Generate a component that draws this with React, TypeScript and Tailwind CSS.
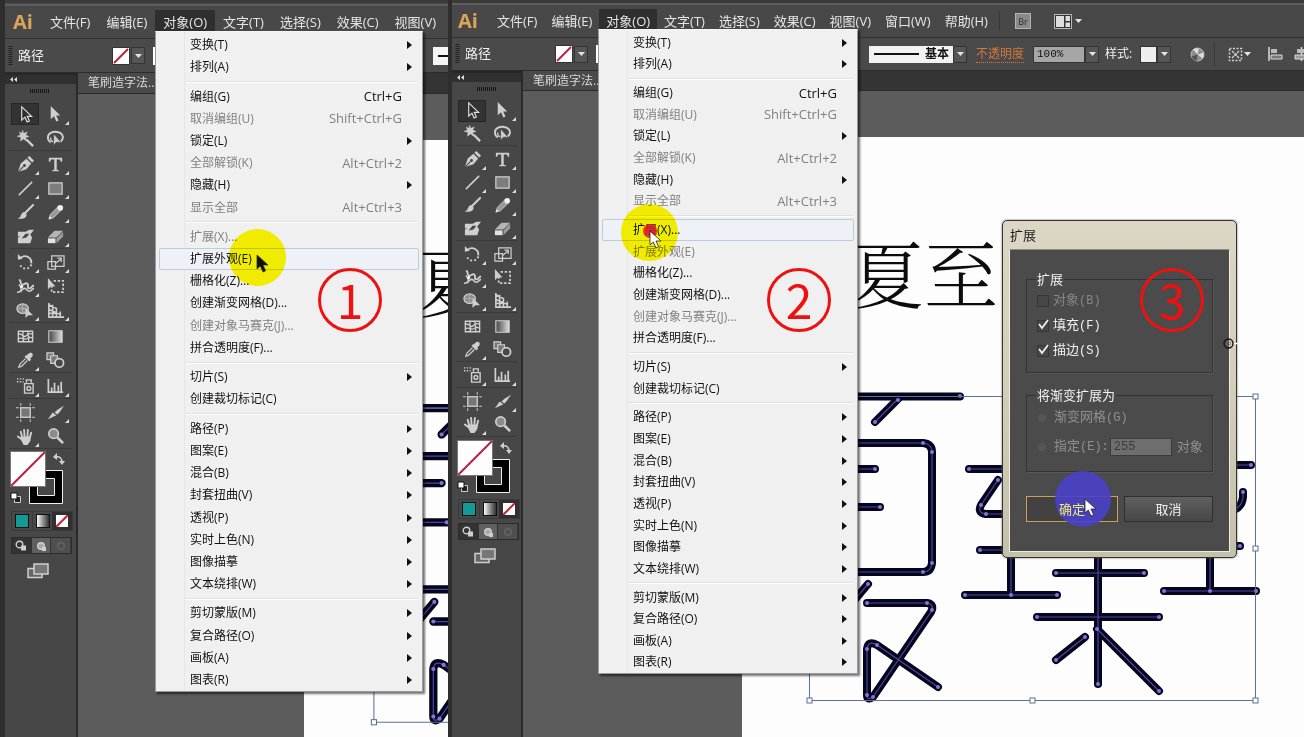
import React from "react";

type Item = { label: string; keys?: string; sub?: boolean; off?: boolean };

const menuGroups: Item[][] = [
  [
    { label: "变换(T)", sub: true },
    { label: "排列(A)", sub: true },
  ],
  [
    { label: "编组(G)", keys: "Ctrl+G" },
    { label: "取消编组(U)", keys: "Shift+Ctrl+G", off: true },
    { label: "锁定(L)", sub: true },
    { label: "全部解锁(K)", keys: "Alt+Ctrl+2", off: true },
    { label: "隐藏(H)", sub: true },
    { label: "显示全部", keys: "Alt+Ctrl+3", off: true },
  ],
  [
    { label: "扩展(X)..." },
    { label: "扩展外观(E)" },
    { label: "栅格化(Z)..." },
    { label: "创建渐变网格(D)..." },
    { label: "创建对象马赛克(J)...", off: true },
    { label: "拼合透明度(F)..." },
  ],
  [{ label: "切片(S)", sub: true }, { label: "创建裁切标记(C)" }],
  [
    { label: "路径(P)", sub: true },
    { label: "图案(E)", sub: true },
    { label: "混合(B)", sub: true },
    { label: "封套扭曲(V)", sub: true },
    { label: "透视(P)", sub: true },
    { label: "实时上色(N)", sub: true },
    { label: "图像描摹", sub: true },
    { label: "文本绕排(W)", sub: true },
  ],
  [
    { label: "剪切蒙版(M)", sub: true },
    { label: "复合路径(O)", sub: true },
    { label: "画板(A)", sub: true },
    { label: "图表(R)", sub: true },
  ],
];

function ObjectMenu({ place, active, off }: { place: string; active: string; off: string }) {
  return (
    <div
      role="menu"
      className={`absolute z-10 flex flex-col border border-[#9a9a9a] border-t-[#f6f6f6] bg-[#f0f0f0] pt-[2px] text-xs text-[#111] shadow-[2px_2px_2px_rgba(0,0,0,0.55)] ${place}`}
    >
      <div className="absolute inset-y-0 left-[28px] w-px bg-[#e6e6e6]" />
      {menuGroups.map((group, g) => (
        <React.Fragment key={g}>
          {g > 0 && (
            <div className="flex min-h-0 flex-[8_1_0%] items-center pl-[30px] pr-1">
              <div className="h-[2px] w-full border-b border-white bg-[#e0e0e0]" />
            </div>
          )}
          {group.map((item) => {
            const disabled = item.off || item.label === off;
            return (
              <button
                key={item.label}
                role="menuitem"
                disabled={disabled}
                className={`relative mx-[3px] flex min-h-0 flex-[22_1_0%] items-center rounded-[2px] border pl-[30px] pr-[6px] text-left leading-none ${
                  item.label === active ? "border-[#c0cadd] bg-[#eef1f8]" : "border-transparent"
                } ${disabled ? "text-[#808080]" : ""}`}
              >
                <span className="flex-1 whitespace-nowrap">{item.label}</span>
                {item.keys && <span className="pr-[10px] text-[13px]">{item.keys}</span>}
                {item.sub && (
                  <svg width="5" height="8" viewBox="0 0 5 8" aria-hidden="true">
                    <path d="M0 0 5 4 0 8Z" fill="#111" />
                  </svg>
                )}
              </button>
            );
          })}
        </React.Fragment>
      ))}
    </div>
  );
}

const L = "#cfcfcf";
const toolIcons: Record<string, React.ReactNode> = {
  选择: <path d="M6 2v14l3.4-3.2 2.3 5.2 2.4-1.1-2.3-5h4.6Z" fill="#2c2c2c" stroke="#e0e0e0" strokeWidth="1.2" />,
  直接选择: <path d="M5 1v14l3.4-3.2 2.5 5.6 2.3-1-2.5-5.4H15Z" fill={L} />,
  魔棒: (
    <g stroke={L} fill={L}>
      <path d="m7 1 1.2 3.4L12 3l-1.6 3.4L14 8l-3.6 1L11 13 8 10.4 4.6 13l.6-4L1 7.6l3.6-1.4L3.4 3l3 1.4Z" strokeWidth=".3" />
      <path d="m11 11 7 7" strokeWidth="2.4" />
    </g>
  ),
  套索: (
    <g fill="none" stroke={L} strokeWidth="2">
      <path d="M5 14C1 12 1 6 5 4s10-1 12 2 0 7-3 8" />
      <path d="M5 9c-1 3 2 5 4 4" strokeWidth="1.4" />
      <path d="M8 5v12l3-3h5Z" fill={L} stroke="#474747" strokeWidth=".8" />
    </g>
  ),
  钢笔: (
    <g fill={L}>
      <path d="M2 18 5 9l6-5 5 5-5 6Z" />
      <path d="m12 3 2-2 5 5-2 2Z" />
      <path d="m2 18 6-6" stroke="#474747" strokeWidth="1.2" />
      <circle cx="9" cy="11" r="1.5" fill="#474747" />
    </g>
  ),
  文字: <path d="M3 3h14v4h-1.4l-.8-2.3h-3.5v10.8l2.2.5v1H6.500v-1l2.200-.5V4.700H5.200L4.400 7H3Z" fill={L} />,
  直线段: <path d="M3 17 17 3" stroke={L} strokeWidth="1.6" />,
  矩形: <path d="M3 4h14v12H3Z" fill="#7d7d7d" stroke={L} strokeWidth="1.3" />,
  画笔: (
    <g>
      <path d="M18 2 9 11" stroke={L} strokeWidth="2.200" strokeLinecap="round" />
      <path d="M9.500 10c2 1 2 3 1 4.500-2 2.500-6 2.500-9 1.500 3-.5 3-2 4-4s2.500-2.500 4-2Z" fill={L} />
    </g>
  ),
  铅笔: (
    <g>
      <path d="m3 17 1.500-5 8-8 3.500 3.500-8 8Z" fill="#9a9a9a" stroke={L} strokeWidth=".8" />
      <circle cx="15" cy="5" r="3" fill="#f0f0f0" />
      <path d="m3 17 1-3 2 2Z" fill="#eee" />
    </g>
  ),
  斑点画笔: (
    <g>
      <path d="M2 5h8l4-2h5l-4 5 2 3-2 6H2v-6l3-1H2Z" fill={L} />
      <path d="m6 12 4-5h4l-3 4Z" fill="#474747" />
    </g>
  ),
  橡皮擦: (
    <g>
      <path d="m2 11 7-7h9l-7 7Z" fill="#b5b5b5" />
      <path d="M2 12h8v5H2Z" fill="#e2e2e2" />
      <path d="m11 12 7-7v5l-7 7Z" fill="#9a9a9a" />
    </g>
  ),
  旋转: (
    <g fill="none" stroke={L} strokeWidth="2">
      <path d="M5 5c5-4 12 0 11 6" />
      <path d="M16 12c-1 6-11 6-12-1" strokeDasharray="2 2.200" />
      <path d="M2 7V1l5 5Z" fill={L} stroke="none" />
    </g>
  ),
  比例缩放: (
    <g fill="none" stroke={L} strokeWidth="1.300">
      <path d="M6 3h13v11H6Z" />
      <path d="M2 9h8v8H2Z" />
      <path d="m10 11 6-5m-4-.5h4v4" />
    </g>
  ),
  宽度: (
    <g fill="none" stroke={L} strokeWidth="2">
      <path d="M3 3c3 0 1 4 3 5s4-3 6-1-1 5 2 5 2-3 5-3" />
      <path d="M1 16c4 1 5-4 8-4s2 3 5 3 3-3 5-3" strokeWidth="1.700" />
      <path d="M3 8c2 2 3 5 2 8" strokeWidth="1.500" />
      <circle cx="6" cy="10" r="1.600" fill="#fff" stroke="none" />
    </g>
  ),
  自由变换: (
    <g fill="none" stroke={L}>
      <path d="M8 4h10v12H6V9" strokeWidth="1.800" strokeDasharray="2.500 1.800" />
      <path d="M2 1v12l3-3h5Z" fill={L} stroke="none" />
    </g>
  ),
  形状生成器: (
    <g>
      <ellipse cx="7" cy="8" rx="6" ry="5" fill="#8b8b8b" stroke={L} strokeWidth="1.400" />
      <path d="M3 8h8M7 4v8" stroke={L} strokeDasharray="1 1" />
      <path d="M10 7v11l3-3h5Z" fill={L} />
    </g>
  ),
  透视网格: (
    <g stroke={L} fill="none" strokeWidth="1.700">
      <path d="M3 2v15h16M7 4v13M11 7v10M3 4l8 4M3 9l12 5M15 11v6" />
      <path d="M3 13h9" />
    </g>
  ),
  网格: (
    <g fill="none" stroke={L} strokeWidth="1.400">
      <path d="M2.500 4.500h15v11h-15Z" />
      <path d="M2 8c5-3 5 5 9 1s4-1 7-2M2 13c4-4 7 2 10-1s4 0 6 0M8 4c-3 4 2 7-1 12M13 4c-2 4 2 6 0 12" />
    </g>
  ),
  渐变: <path d="M3 4h14v12H3Z" fill="url(#toolGradient)" stroke={L} strokeWidth="1.200" />,
  吸管: (
    <g>
      <path d="m11 5 2-2c3-3 6 0 4 3l-2 2 1 1-2 2-5-5 2-2Z" fill={L} />
      <path d="m10 8-6 6-1 3 3-1 6-6" fill="none" stroke={L} strokeWidth="1.300" />
    </g>
  ),
  混合: (
    <g fill="#777" stroke={L} strokeWidth="1.300">
      <path d="M1 2h7v7H1Z" />
      <path d="M5 5h7v8H5Z" />
      <circle cx="14" cy="12.500" r="4.500" fill="#474747" strokeWidth="1.800" />
    </g>
  ),
  符号喷枪: (
    <g fill="none" stroke={L} strokeWidth="1.500">
      <path d="M9 7h9v10H9ZM11 6V3h5v3" />
      <circle cx="13.500" cy="12" r="2" />
      <path d="M1 2h8M1 5h7" strokeDasharray="1.500 1.500" />
    </g>
  ),
  柱形图: <path d="M2.500 2v14H18M6 15v-4m3 4V6m4 9V9m3 6V5" fill="none" stroke={L} strokeWidth="1.800" />,
  画板: (
    <g stroke={L}>
      <path d="M5 5h10v10H5Z" fill="#777" />
      <path d="M5 0v3m0 14v3M15 0v3m0 14v3M0 5h3m14 0h3M0 15h3m14 0h3M4 5h12M4 15h12M5 4v12M15 4v12" fill="none" />
    </g>
  ),
  切片: <path d="m2 17 5-7 4 3Zm7-7 3-3 7-4-5 7-2 2Z" fill={L} />,
  抓手: (
    <g stroke={L} strokeLinecap="round">
      <path d="M6.500 11 5 5m4 5-.5-7m3.500 7 .5-7m2 8L16 6M6 13l-4-3" strokeWidth="2" fill="none" />
      <path d="m4 11 2-1h9l1-1-1 6-3 4H8Z" fill={L} stroke="none" />
    </g>
  ),
  缩放: (
    <g>
      <circle cx="8" cy="7" r="5" fill="#8b8b8b" stroke={L} strokeWidth="1.800" />
      <path d="m12 11 6 6" stroke={L} strokeWidth="2.800" />
    </g>
  ),
};

const toolGroups: string[][] = [
  ["选择", "直接选择", "魔棒", "套索"],
  ["钢笔", "文字", "直线段", "矩形", "画笔", "铅笔", "斑点画笔", "橡皮擦"],
  ["旋转", "比例缩放", "宽度", "自由变换", "形状生成器", "透视网格"],
  ["网格", "渐变", "吸管", "混合"],
  ["符号喷枪", "柱形图"],
  ["画板", "切片", "抓手", "缩放"],
];
const noFlyout = ["选择", "魔棒", "套索", "画笔", "斑点画笔", "自由变换", "网格", "渐变", "混合", "画板", "缩放"];

type Size = {
  frame: string;
  top: string;
  brand: string;
  menuButton: string;
  control: string;
  controlLabel: string;
  tabs: string;
  panel: string;
  grip: string;
  row: string;
  gap: string;
  colors: string;
  modes: string;
  screen: string;
  artboard: string;
  drawing: string;
};

function ToolPanel({ s }: { s: Size }) {
  return (
    <aside className={`shrink-0 border-r-2 border-[#2a2a2a] bg-[#474747] ${s.panel}`}>
      <div className="flex h-[11px] items-center border-t-2 border-[#272727] bg-[#303030] pl-[5px]">
        <svg width="8" height="5" viewBox="0 0 8 5" aria-hidden="true">
          <path d="M3 0 0 2.500 3 5ZM7 0 4 2.500 7 5Z" fill="#ddd" />
        </svg>
      </div>
      <div className={`pl-[25px] pt-[5px] ${s.grip}`}>
        <svg width="20" height="4" viewBox="0 0 20 4" aria-hidden="true">
          <path d="M0 2h20" stroke="#151515" strokeWidth="4" strokeDasharray="1 1" />
        </svg>
      </div>
      {toolGroups.map((group, i) => (
        <React.Fragment key={i}>
          {i > 0 && <div className={`mx-1 border-t border-[#3b3b3b] ${s.gap}`} />}
          <div className="grid grid-cols-[30px_30px] pl-[5px]">
            {group.map((name) => (
              <button key={name} aria-label={name} className={`relative flex items-center justify-center ${s.row}`}>
                <span
                  className={`flex h-[22px] w-7 items-center justify-center ${
                    name === "选择" ? "border border-[#272727] bg-[#333]" : ""
                  }`}
                >
                  <svg width="19" height="19" viewBox="0 0 20 20" aria-hidden="true">
                    {toolIcons[name]}
                  </svg>
                </span>
                {!noFlyout.includes(name) && (
                  <svg className="absolute bottom-px right-px" width="4" height="4" viewBox="0 0 4 4" aria-hidden="true">
                    <path d="M4 0v4H0Z" fill="#ddd" />
                  </svg>
                )}
              </button>
            ))}
          </div>
        </React.Fragment>
      ))}
      <div className={`mx-1 border-t border-[#3b3b3b] ${s.gap}`} />
      <svg className="ml-[5px]" width="60" height="57" viewBox="0 0 60 57" aria-label="填色和描边">
        <path d="M19.500 20.500h33v33h-33Z" fill="#000" stroke="#eee" />
        <path d="M27.500 28.500h17v17h-17Z" fill="#474747" stroke="#eee" />
        <path d="M.5 1.500h35v35H.5Z" fill="#fdfdfd" stroke="#777" />
        <path d="M1 36 35 2" stroke="#b8203c" strokeWidth="2" />
        <path d="M45 7c5-1 7 1 7 6" fill="none" stroke={L} strokeWidth="1.500" />
        <path d="m43 7 4-4v7ZM49 11h6l-3 4Z" fill={L} />
        <path d="M4.500 46.500h6v6h-6Z" fill="#222" stroke={L} />
        <path d="M1 43h6v6H1Z" fill="#fff" stroke="#111" />
      </svg>
      <div className={`ml-[6px] flex h-5 w-[62px] border border-[#3a3a3a] ${s.colors}`}>
        <button aria-label="颜色" className="flex flex-1 items-center justify-center border-r border-[#3a3a3a]">
          <span className="h-[14px] w-[14px] border border-[#111] bg-[#149a96]" />
        </button>
        <button aria-label="渐变" className="flex flex-1 items-center justify-center">
          <span className="h-[14px] w-[14px] border border-[#111] bg-linear-to-r from-white to-[#333]" />
        </button>
        <button aria-label="无" className="flex flex-1 items-center justify-center bg-[#303030]">
          <svg width="12" height="12" viewBox="0 0 12 12" aria-hidden="true">
            <path d="M0 0h12v12H0Z" fill="#fff" />
            <path d="M0 12 12 0" stroke="#cc1f36" strokeWidth="2" />
          </svg>
        </button>
      </div>
      <div className={`ml-[6px] flex h-[17px] w-[61px] border border-[#2c2c2c] ${s.modes}`}>
        {["正常绘图", "背面绘图", "内部绘图"].map((name, i) => (
          <button
            key={name}
            aria-label={name}
            className={`flex flex-1 items-center justify-center border-r border-[#333] ${
              i === 0 ? "bg-[#333]" : i === 1 ? "bg-[#606060]" : "bg-[#555] opacity-60"
            }`}
          >
            <svg width="12" height="12" viewBox="0 0 12 12" aria-hidden="true">
              <circle
                cx={i === 0 ? 4.5 : 6}
                cy={i === 0 ? 4.5 : 6}
                r="3.300"
                fill={i === 1 ? "#aaa" : "none"}
                stroke={i === 2 ? "#777" : L}
                strokeWidth="1.400"
              />
              {i === 0 && <path d="M6 5.500h5v5H6Z" fill={L} />}
              {i === 1 && <path d="M7 7h4v4H7Z" fill={L} />}
            </svg>
          </button>
        ))}
      </div>
      <button aria-label="更改屏幕模式" className={`ml-[22px] block h-4 ${s.screen}`}>
        <svg width="22" height="16" viewBox="0 0 22 16" aria-hidden="true">
          <path d="M1 5.500h14v9H1Z" fill="#666" stroke={L} strokeWidth="1.500" />
          <path d="M7 1h14v10H7Z" fill="#777" stroke={L} strokeWidth="1.500" />
        </svg>
      </button>
    </aside>
  );
}

const strokes = [
  "M830 395.500H961",
  "M899 398 876 421",
  "M830 442H924Q933 443 933 451V562Q932 571 924 571H830",
  "M830 468H876",
  "M830 506H881",
  "M869 583 848 608",
  "M868 602H928Q936 603 932 611L874 696Q868 700 868 694V648Q869 639 878 644L939 686",
  "M970 468H1020",
  "M999 479 982 504Q978 512 987 513H1020",
  "M981 549H1020",
  "M1012 540V594",
  "M966 594H1058",
  "M1057 572H1145",
  "M1038 616H1160",
  "M1099 540V683",
  "M1098 628 1160 690",
  "M1086 636 1057 659",
  "M1211 540V590",
  "M1165 590H1257",
  "M1220 464H1252",
  "M1244 491V496Q1243 508 1230 510",
  "M1220 545H1241",
];
const nodes = [
  [961, 395], [899, 399], [876, 421], [924, 442], [933, 451], [933, 562], [924, 571], [876, 468], [881, 506], [869, 583],
  [868, 602], [928, 602], [933, 609], [874, 696], [868, 694], [868, 648], [878, 644], [939, 686], [970, 468], [999, 479],
  [982, 504], [987, 513], [981, 549], [1012, 594], [966, 594], [1058, 594], [1057, 572], [1145, 572], [1038, 616],
  [1160, 616], [1099, 683], [1098, 628], [1160, 690], [1086, 636], [1057, 659], [1211, 590], [1165, 590], [1257, 590],
  [1252, 464], [1244, 491], [1241, 545],
];
const handles = [[810, 395], [1256, 395], [1256, 547], [1256, 699], [1033, 699], [810, 699]];

function Drawing({ size }: { size: string }) {
  return (
    <svg className={`block max-w-none ${size}`} viewBox="743 136 561 601" aria-label="画板内容">
      <text
        x="925"
        y="302"
        textAnchor="middle"
        fontSize="74"
        fontWeight="300"
        fill="#0c0c0c"
        fontFamily='"Noto Serif CJK SC", "Noto Sans CJK SC", serif'
      >
        夏至
      </text>
      <g fill="none" strokeLinecap="round" strokeLinejoin="round">
        {strokes.map((d) => (
          <path key={d} d={d} stroke="#05051c" strokeWidth="8" />
        ))}
        {strokes.map((d) => (
          <path key={d} d={d} stroke="#4a48a4" strokeWidth="1.200" />
        ))}
      </g>
      {nodes.map(([x, y]) => (
        <circle key={`${x}-${y}`} cx={x} cy={y} r="2" fill="#8078d8" />
      ))}
      <path d="M810.500 395.500h446v304h-446Z" fill="none" stroke="#5d7096" />
      {handles.map(([x, y]) => (
        <rect key={`${x}-${y}`} x={x - 2} y={y - 2} width="5" height="5" fill="#fff" stroke="#5d7096" />
      ))}
    </svg>
  );
}

function Arrow() {
  return (
    <svg width="7" height="4" viewBox="0 0 7 4" aria-hidden="true">
      <path d="M0 0h7L3.500 4Z" fill="#e4e4e4" />
    </svg>
  );
}

function DropButton({ label }: { label: string }) {
  return (
    <button
      aria-label={label}
      className="flex h-[17px] w-[14px] shrink-0 items-center justify-center border border-[#343434] bg-[#565656]"
    >
      <Arrow />
    </button>
  );
}

function Pane({
  s,
  className,
  menus,
  menubarExtra,
  controls,
  children,
}: {
  s: Size;
  className: string;
  menus: string[];
  menubarExtra?: React.ReactNode;
  controls: React.ReactNode;
  children: React.ReactNode;
}) {
  return (
    <section className={`relative flex flex-col overflow-hidden bg-[#2e2e2e] ${s.frame} ${className}`}>
      <div className={`shrink-0 border-b-2 border-t-[3px] border-b-[#5e5e5e] border-t-[#3a3a3a] bg-[#4a4a4a] ${s.top}`} />
      <header className="flex h-8 shrink-0 items-center bg-[#484848] text-[13px] leading-none text-[#e6e6e6]">
        <div className={`shrink-0 font-[Open_Sans,sans-serif] text-xl font-bold leading-none text-[#d9a556] ${s.brand}`}>Ai</div>
        <nav className="flex shrink-0">
          {menus.map((m) => (
            <button
              key={m}
              className={`h-6 whitespace-nowrap leading-none ${s.menuButton} ${m === "对象(O)" ? "bg-[#2f2f2f]" : ""}`}
            >
              {m}
            </button>
          ))}
        </nav>
        {menubarExtra}
      </header>
      <div
        className={`flex shrink-0 items-center overflow-hidden border-y border-b-[#2c2c2c] border-t-[#303030] bg-[#4a4a4a] text-[13px] text-[#f0f0f0] ${s.control}`}
      >
        <div className={`flex shrink-0 items-center gap-[5px] pl-[3px] ${s.controlLabel}`}>
          <svg width="5" height="20" viewBox="0 0 5 20" aria-hidden="true">
            <path d="M2.500 0v20" stroke="#222" strokeWidth="4" strokeDasharray="1 1" />
          </svg>
          路径
        </div>
        <button aria-label="填色" className="mr-px shrink-0">
          <svg width="18" height="18" viewBox="0 0 18 18" aria-hidden="true">
            <path d="M.5.5h17v17H.5Z" fill="#fff" stroke="#333" />
            <path d="M2 16 16 2" stroke="#c01f3c" strokeWidth="2" />
          </svg>
        </button>
        <DropButton label="填色选项" />
        <div className="ml-2 h-[18px] w-10 shrink-0 bg-white" />
        {controls}
      </div>
      <div className="flex min-h-0 flex-1">
        <ToolPanel s={s} />
        <div className="flex min-w-0 flex-1 flex-col bg-[#5c5c5c]">
          <div className={`flex shrink-0 border-b border-[#2b2b2b] bg-[#343434] ${s.tabs}`}>
            <div className="flex w-40 items-center bg-[#4a4a4a] pl-[10px] text-xs leading-none text-[#d8d8d8]">
              笔刷造字法...
            </div>
          </div>
          <div className={`mt-[46px] flex-1 overflow-hidden bg-[#fdfdfd] ${s.artboard}`}>
            <Drawing size={s.drawing} />
          </div>
        </div>
      </div>
      {children}
    </section>
  );
}

function StepMark({ n, place }: { n: number; place: string }) {
  return (
    <div
      className={`absolute z-30 flex h-16 w-16 items-center justify-center rounded-full border-[3px] border-[#ee1111] pb-1 font-['Noto_Sans_CJK_SC',sans-serif] text-5xl leading-none text-[#ee1111] ${place}`}
    >
      {n}
    </div>
  );
}

function Pointer({ place, dark }: { place: string; dark?: boolean }) {
  return (
    <svg className={`absolute z-40 ${place}`} width="13" height="19" viewBox="0 0 13 19" aria-hidden="true">
      <path
        d="M1 1v14l3.300-3L7 18l2.600-1.200L7 11h5Z"
        fill={dark ? "#111" : "#fff"}
        stroke={dark ? "#333" : "#222"}
        strokeWidth=".8"
      />
    </svg>
  );
}

function Check({ label, hotkey, checked, disabled }: { label: string; hotkey: string; checked?: boolean; disabled?: boolean }) {
  return (
    <label className={`relative flex h-[25px] items-center gap-1 pl-px ${disabled ? "text-[#868686]" : "text-[#f2f2f2]"}`}>
      <input
        type="checkbox"
        defaultChecked={checked}
        disabled={disabled}
        className="peer h-3 w-3 appearance-none border border-[#363636] bg-[#464646]"
      />
      <svg className="absolute left-px top-[6px] hidden peer-checked:block" width="13" height="12" viewBox="0 0 13 12" aria-hidden="true">
        <path d="m2 5 3 4 6-8" fill="none" stroke="#eee" strokeWidth="1.800" />
      </svg>
      <span>
        {label}
        <span className="font-['Liberation_Mono',monospace] text-xs">{hotkey}</span>
      </span>
    </label>
  );
}

function ExpandDialog() {
  const group = "border border-[#343434] px-[9px] shadow-[1px_1px_0_#585858]";
  return (
    <div
      role="dialog"
      aria-label="扩展"
      className="absolute left-[552px] top-[220px] z-20 w-[235px] rounded-[5px] border border-[#33332c] bg-linear-to-b from-[#dcd6c4] via-[#d2cfb8] to-[#c3c0ab] px-[6px] pb-[5px] text-[13px] leading-none shadow-[0_0_2px_#555]"
    >
      <h2 className="flex h-7 items-center pl-px text-[#1a1a1a]">扩展</h2>
      <div className="border border-[#f1edda] border-t-[#8d8a7c] bg-[#4b4b4b] px-4 pb-[29px] pt-5">
        <fieldset className={`${group} pb-[9px]`}>
          <legend className="h-[18px] px-px leading-[18px] text-[#f2f2f2]">扩展</legend>
          <Check label="对象" hotkey="(B)" disabled />
          <Check label="填充" hotkey="(F)" checked />
          <Check label="描边" hotkey="(S)" checked />
        </fieldset>
        <fieldset className={`${group} mt-[13px] pb-[10px] text-[#909090]`}>
          <legend className="h-[18px] px-px leading-[18px] text-[#f2f2f2]">将渐变扩展为</legend>
          <label className="flex h-7 items-center gap-2 pl-[2px]">
            <input type="radio" name="gradient" disabled className="h-2 w-2 appearance-none rounded-full bg-[#565656]" />
            <span>
              渐变网格<span className="font-['Liberation_Mono',monospace] text-xs">(G)</span>
            </span>
          </label>
          <div className="flex h-[29px] items-center whitespace-nowrap">
            <label className="flex items-center gap-2 pl-[2px]">
              <input type="radio" name="gradient" disabled className="h-2 w-2 appearance-none rounded-full bg-[#565656]" />
              <span>
                指定<span className="font-['Liberation_Mono',monospace] text-xs">(E):</span>
              </span>
            </label>
            <input
              aria-label="指定对象数"
              disabled
              defaultValue="255"
              className="ml-px h-[18px] w-[62px] border border-[#3c3c3c] bg-[#6e6e6e] px-[3px] font-['Liberation_Mono',monospace] text-xs text-[#3a3a3a]"
            />
            <span className="pl-[5px]">对象</span>
          </div>
        </fieldset>
        <div className="mt-6 flex gap-[6px]">
          <button className="h-[26px] w-[92px] border border-[#d49a5c] bg-[#424242] text-[#f0ee70]">
            <span className="relative z-10">确定</span>
          </button>
          <button className="h-[26px] flex-1 border border-[#2f2f2f] bg-linear-to-b from-[#606060] to-[#474747] text-[#f0f0f0]">
            取消
          </button>
        </div>
      </div>
      <div className="absolute left-[52px] top-[250px] h-14 w-14 rounded-full bg-[#4a41c6]/90" />
      <Pointer place="left-[81px] top-[277px]" />
      <svg className="absolute left-[220px] top-[117px]" width="16" height="11" viewBox="0 0 16 11" aria-hidden="true">
        <circle cx="5.500" cy="5.500" r="4.500" fill="none" stroke="#161616" strokeWidth="1.400" />
        <circle cx="5.500" cy="5.500" r="2" fill="none" stroke="#777" />
        <path d="M11 5.500h4" stroke="#fff" strokeWidth="1.500" />
      </svg>
    </div>
  );
}

const firstSize: Size = {
  frame: "pl-[5px] pr-[2px]",
  top: "h-[6px]",
  brand: "w-[37px] pl-2",
  menuButton: "px-2",
  control: "h-[35px]",
  controlLabel: "w-[107px]",
  tabs: "h-[21px]",
  panel: "w-[73px]",
  grip: "h-[18px]",
  row: "h-6",
  gap: "h-[2px]",
  colors: "mt-1",
  modes: "mt-[6px]",
  screen: "mt-[9px]",
  artboard: "ml-[226px]",
  drawing: "h-[621px] w-[580px]",
};

const secondSize: Size = {
  frame: "pl-[2px]",
  top: "h-1",
  brand: "w-[38px] pl-[6px]",
  menuButton: "px-[7px]",
  control: "h-[34px]",
  controlLabel: "w-[103px]",
  tabs: "h-5",
  panel: "w-[71px]",
  grip: "h-[17px]",
  row: "h-[23px]",
  gap: "h-[3px]",
  colors: "mt-[3px]",
  modes: "mt-1",
  screen: "mt-2",
  artboard: "ml-[219px]",
  drawing: "h-[601px] w-[561px]",
};

const menus = ["文件(F)", "编辑(E)", "对象(O)", "文字(T)", "选择(S)", "效果(C)", "视图(V)"];

export default function App() {
  return (
    <main className="flex h-screen overflow-hidden bg-[#2e2e2e] font-['Open_Sans','Noto_Sans_CJK_SC',sans-serif]">
      <svg className="absolute" width="0" height="0" aria-hidden="true">
        <defs>
          <linearGradient id="toolGradient">
            <stop offset="0" stopColor="#444" />
            <stop offset="1" stopColor="#ddd" />
          </linearGradient>
        </defs>
      </svg>

      <Pane
        s={firstSize}
        className="w-[450px] shrink-0"
        menus={menus}
        controls={
          <button aria-label="描边样式" className="ml-60 flex h-[18px] w-20 shrink-0 items-center bg-[#f4f4f4] pl-[5px]">
            <span className="h-[2px] w-12 bg-[#111]" />
          </button>
        }
      >
        <ObjectMenu place="left-[155px] top-[31px] h-[661px] w-[268px]" active="扩展外观(E)" off="扩展(X)..." />
        <div className="absolute left-[229px] top-[229px] z-20 h-[57px] w-[57px] rounded-full bg-[#fffa00] mix-blend-multiply" />
        <Pointer place="left-[256px] top-[254px]" dark />
        <StepMark n={1} place="left-[318px] top-[268px]" />
      </Pane>

      <Pane
        s={secondSize}
        className="min-w-0 flex-1"
        menus={[...menus, "窗口(W)", "帮助(H)"]}
        menubarExtra={
          <div className="flex shrink-0 items-center">
            <div className="ml-1 mr-[15px] h-5 w-px bg-[#383838]" />
            <button
              aria-label="Bridge"
              className="flex h-4 w-4 items-center justify-center border border-[#b4b4b4] bg-[#8a8a8a] text-[9px] leading-none text-[#2d2d2d]"
            >
              Br
            </button>
            <button aria-label="排列文档" className="ml-[23px] flex items-center gap-[3px]">
              <svg width="18" height="15" viewBox="0 0 18 15" aria-hidden="true">
                <path d="M.5.5h17v14H.5Z" fill="#333" stroke="#bbb" />
                <path d="M2 2h8v11H2Zm9.500 0H16v5h-4.500Zm0 6.500H16V13h-4.500Z" fill="#ddd" />
              </svg>
              <Arrow />
            </button>
          </div>
        }
        controls={
          <>
            <button
              aria-label="描边样式"
              className="ml-[233px] flex h-[17px] w-[84px] shrink-0 items-center justify-between bg-[#f2f2f2] pl-[5px] pr-1 text-xs font-bold leading-none text-[#111]"
            >
              <span className="h-[2px] w-[45px] bg-[#111]" />
              基本
            </button>
            <DropButton label="描边样式选项" />
            <a href="#opacity" className="ml-[9px] shrink-0 border-b border-dotted border-[#d2783a] text-xs leading-4 text-[#d2783a]">
              不透明度
            </a>
            <input
              aria-label="不透明度"
              defaultValue="100%"
              className="ml-[9px] h-[17px] w-[52px] shrink-0 border border-[#333] bg-[#a6a6a6] px-[3px] font-['Liberation_Mono',monospace] text-[11px] leading-none text-[#111]"
            />
            <DropButton label="不透明度选项" />
            <span className="ml-[6px] shrink-0 text-xs">样式:</span>
            <span className="ml-2 h-[17px] w-[17px] shrink-0 border border-[#333] bg-[#eee]" />
            <DropButton label="样式选项" />
            <button aria-label="重新着色图稿" className="ml-[19px] shrink-0">
              <svg width="15" height="15" viewBox="0 0 15 15" aria-hidden="true">
                <circle cx="7.500" cy="7.500" r="6.500" fill="#8d8d8d" stroke="#b8b8b8" />
                <path d="M7.500 7.500 3 2.500a7 7 0 0 1 6-1ZM7.500 7.500l6-2a7 7 0 0 1-1 6Z" fill="#ddd" />
                <path d="m7.500 7.500-6 2a7 7 0 0 0 5 4.500Z" fill="#555" />
              </svg>
            </button>
            <div className="ml-[9px] mr-[13px] h-6 w-px shrink-0 bg-[#3a3a3a]" />
            <button aria-label="对齐选项" className="flex shrink-0 items-center gap-px">
              <svg width="15" height="15" viewBox="0 0 15 15" aria-hidden="true">
                <path d="M1.500 1.500h12v12h-12Z" fill="none" stroke="#d0d0d0" strokeWidth="1.500" strokeDasharray="2 1.500" />
                <path d="m4 4 2 2m5-2L9 6m-5 5 2-2m5 2L9 9" stroke="#d0d0d0" strokeWidth="1.300" />
                <circle cx="7.500" cy="7.500" r="1.500" fill="#d0d0d0" />
              </svg>
              <Arrow />
            </button>
            <button aria-label="水平左对齐" className="ml-[17px] shrink-0">
              <svg width="15" height="14" viewBox="0 0 15 14" aria-hidden="true">
                <path d="M1 0v14" stroke="#ddd" strokeWidth="1.500" />
                <path d="M3 2h6v4H3Z" fill="#bbb" />
                <path d="M3 8h11v4H3Z" fill="#777" stroke="#ddd" />
              </svg>
            </button>
            <button aria-label="水平居中对齐" className="ml-[11px] shrink-0">
              <svg width="15" height="14" viewBox="0 0 15 14" aria-hidden="true">
                <path d="M7.500 0v14" stroke="#ddd" strokeWidth="1.500" />
                <path d="M3 2h9v4H3Z" fill="#bbb" />
                <path d="M1 8h13v4H1Z" fill="#999" stroke="#ddd" />
              </svg>
            </button>
          </>
        }
      >
        <ObjectMenu place="left-[148px] top-[29px] h-[645px] w-[260px]" active="扩展(X)..." off="扩展外观(E)" />
        <div className="absolute left-[171px] top-[204px] z-20 h-[57px] w-[57px] rounded-full bg-[#fffa00] mix-blend-multiply" />
        <div className="absolute left-[193px] top-[224px] z-20 h-[14px] w-[14px] rounded-full bg-[#e4142c]/85" />
        <Pointer place="left-[199px] top-[230px]" />
        <StepMark n={2} place="left-[317px] top-[268px]" />
        <ExpandDialog />
        <StepMark n={3} place="left-[690px] top-[268px]" />
      </Pane>
    </main>
  );
}
